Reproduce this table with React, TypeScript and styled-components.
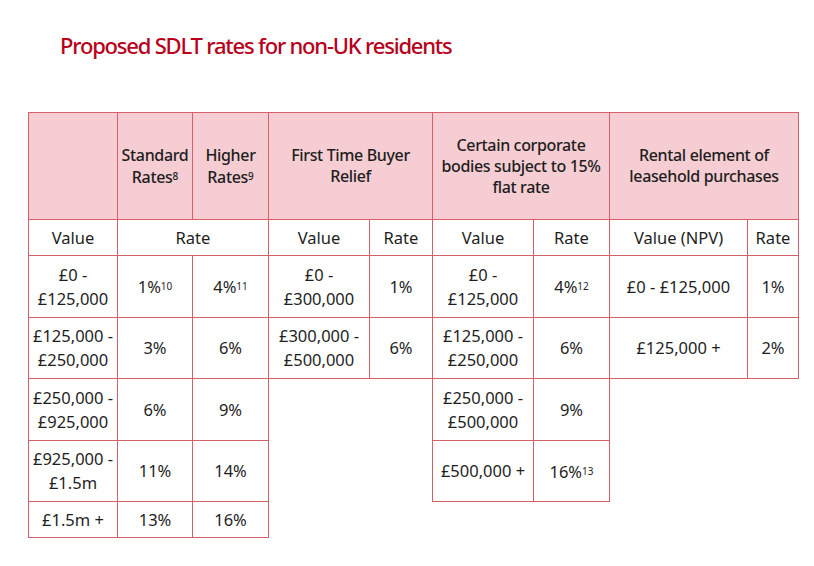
import styled, { createGlobalStyle } from "styled-components";

const GlobalStyle = createGlobalStyle`
  body {
    margin: 0;
    background: #fff;
    font-family: "Noto Sans", "Open Sans", sans-serif;
    color: #1e1e1e;
  }
`;

const Page = styled.div`
  width: 814px;
  height: 566px;
  padding: 30px 0 0 28px;
  box-sizing: border-box;
`;

const Title = styled.h1`
  margin: 0 0 0 32px;
  height: 82px;
  font-family: "Noto Sans", sans-serif;
  font-size: 22px;
  font-weight: 500;
  letter-spacing: -1.2px;
  color: #b8001c;
`;

const Table = styled.table`
  border-collapse: collapse;
  table-layout: fixed;
  width: 770px;
  font-size: 16.5px;
`;

const HeadRow = styled.tr`
  height: 107px;
`;

const Row = styled.tr<{ $h: number }>`
  height: ${(p) => p.$h}px;
`;

const Head = styled.th`
  background: #f5cdd2;
  border: 1px solid #d5606a;
  font-weight: 500;
  font-size: 16px;
  letter-spacing: -0.35px;
  line-height: 21px;
  text-align: center;
  vertical-align: middle;
  padding: 0 1px;
`;

const Cell = styled.td`
  border: 1px solid #d5606a;
  text-align: center;
  vertical-align: middle;
  line-height: 24px;
  padding: 0;
  white-space: nowrap;
`;

const Blank = styled.td`
  border: none;
`;

const Sup = styled.span`
  font-size: 10px;
  letter-spacing: 0;
  vertical-align: 3px;
`;

const widths = [89, 75, 76, 101, 63, 101, 76, 138, 51];

export default function App() {
  return (
    <>
      <GlobalStyle />
      <Page>
        <Title>Proposed SDLT rates for non-UK residents</Title>
        <Table>
          <colgroup>
            {widths.map((w, i) => (
              <col key={i} style={{ width: w }} />
            ))}
          </colgroup>
          <tbody>
            <HeadRow>
              <Head />
              <Head>
                Standard
                <br />
                Rates<Sup>8</Sup>
              </Head>
              <Head>
                Higher
                <br />
                Rates<Sup>9</Sup>
              </Head>
              <Head colSpan={2}>
                First Time Buyer
                <br />
                Relief
              </Head>
              <Head colSpan={2}>
                Certain corporate
                <br />
                bodies subject to 15%
                <br />
                flat rate
              </Head>
              <Head colSpan={2}>
                Rental element of
                <br />
                leasehold purchases
              </Head>
            </HeadRow>
            <Row $h={36}>
              <Cell>Value</Cell>
              <Cell colSpan={2}>Rate</Cell>
              <Cell>Value</Cell>
              <Cell>Rate</Cell>
              <Cell>Value</Cell>
              <Cell>Rate</Cell>
              <Cell>Value (NPV)</Cell>
              <Cell>Rate</Cell>
            </Row>
            <Row $h={62}>
              <Cell>
                £0 -<br />
                £125,000
              </Cell>
              <Cell>
                1%<Sup>10</Sup>
              </Cell>
              <Cell>
                4%<Sup>11</Sup>
              </Cell>
              <Cell>
                £0 -<br />
                £300,000
              </Cell>
              <Cell>1%</Cell>
              <Cell>
                £0 -<br />
                £125,000
              </Cell>
              <Cell>
                4%<Sup>12</Sup>
              </Cell>
              <Cell>£0 - £125,000</Cell>
              <Cell>1%</Cell>
            </Row>
            <Row $h={61}>
              <Cell>
                £125,000 -<br />
                £250,000
              </Cell>
              <Cell>3%</Cell>
              <Cell>6%</Cell>
              <Cell>
                £300,000 -<br />
                £500,000
              </Cell>
              <Cell>6%</Cell>
              <Cell>
                £125,000 -<br />
                £250,000
              </Cell>
              <Cell>6%</Cell>
              <Cell>£125,000 +</Cell>
              <Cell>2%</Cell>
            </Row>
            <Row $h={62}>
              <Cell>
                £250,000 -<br />
                £925,000
              </Cell>
              <Cell>6%</Cell>
              <Cell>9%</Cell>
              <Blank colSpan={2} />
              <Cell>
                £250,000 -<br />
                £500,000
              </Cell>
              <Cell>9%</Cell>
              <Blank colSpan={2} />
            </Row>
            <Row $h={61}>
              <Cell>
                £925,000 -<br />
                £1.5m
              </Cell>
              <Cell>11%</Cell>
              <Cell>14%</Cell>
              <Blank colSpan={2} />
              <Cell>£500,000 +</Cell>
              <Cell>
                16%<Sup>13</Sup>
              </Cell>
              <Blank colSpan={2} />
            </Row>
            <Row $h={36}>
              <Cell>£1.5m +</Cell>
              <Cell>13%</Cell>
              <Cell>16%</Cell>
              <Blank colSpan={6} />
            </Row>
          </tbody>
        </Table>
      </Page>
    </>
  );
}
